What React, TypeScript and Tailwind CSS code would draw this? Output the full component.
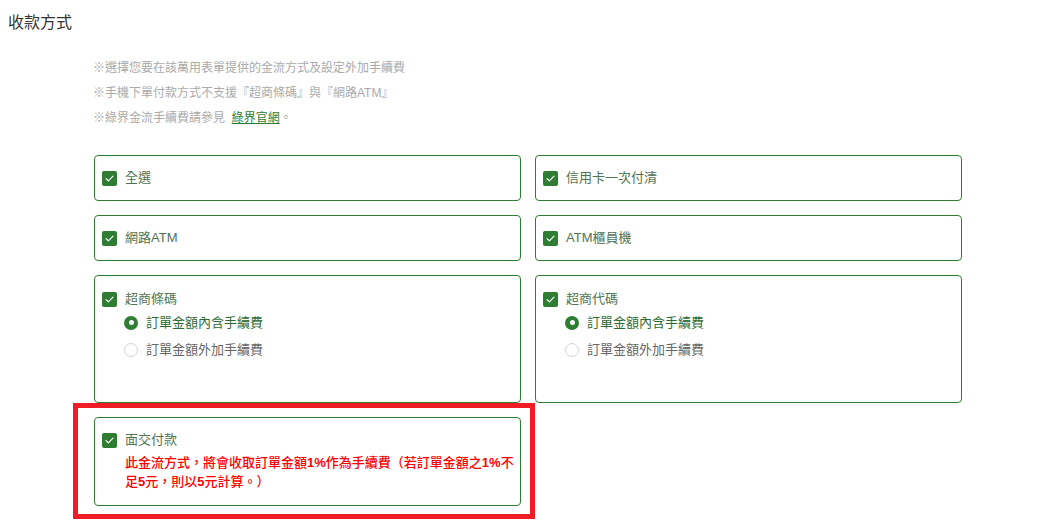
import React from 'react';

const FONT = '"Liberation Sans", "Noto Sans CJK TC", sans-serif';

function CheckBox() {
  return (
    <span className="flex h-[15px] w-[15px] shrink-0 items-center justify-center rounded-[2px] bg-[#2e7d32]">
      <svg width="9" height="7" viewBox="0 0 9 7" fill="none">
        <path d="M1 3.6 L3.4 5.8 L8 1.2" stroke="#fff" strokeWidth="1.2" strokeLinecap="round" strokeLinejoin="round" />
      </svg>
    </span>
  );
}

function CheckRow({ label }: { label: string }) {
  return (
    <div className="flex h-5 items-center gap-2">
      <CheckBox />
      <span className="text-[13px] text-[#4f7354]">{label}</span>
    </div>
  );
}

function Radio({ checked, label }: { checked: boolean; label: string }) {
  return (
    <div className="flex h-[27px] items-center gap-2 pl-[22px]">
      {checked ? (
        <span className="flex h-[14px] w-[14px] items-center justify-center rounded-full bg-[#2e7d32]">
          <span className="h-[5px] w-[5px] rounded-full bg-white" />
        </span>
      ) : (
        <span className="h-[14px] w-[14px] rounded-full border border-[#d4d4d4] bg-white" />
      )}
      <span className={`text-[13px] ${checked ? 'text-[#2e6b34]' : 'text-[#666]'}`}>{label}</span>
    </div>
  );
}

function SimpleCard({ label }: { label: string }) {
  return (
    <div className="flex h-[46px] items-center rounded-[4px] border border-[#2e7d32] px-[7px]">
      <CheckRow label={label} />
    </div>
  );
}

function StoreCard({ label }: { label: string }) {
  return (
    <div className="h-[128px] rounded-[4px] border border-[#2e7d32] px-[7px] pt-[13px]">
      <CheckRow label={label} />
      <Radio checked label="訂單金額內含手續費" />
      <Radio checked={false} label="訂單金額外加手續費" />
    </div>
  );
}

export default function App() {
  return (
    <div className="relative h-[527px] w-[1050px] overflow-hidden bg-white" style={{ fontFamily: FONT }}>
      <h2 className="pl-2 pt-[11px] text-[16px] leading-6 text-[#333]">收款方式</h2>

      <div className="mt-[21px] pl-[93px] text-[12px] leading-[25px] text-[#aaa]">
        <p>※選擇您要在該萬用表單提供的金流方式及設定外加手續費</p>
        <p>※手機下單付款方式不支援『超商條碼』與『網路ATM』</p>
        <p>
          ※綠界金流手續費請參見&nbsp;&nbsp;
          <a className="text-[#2e7d32] underline">綠界官網</a>。
        </p>
      </div>

      <div className="ml-[94px] mt-[24px] grid w-[868px] grid-cols-2 gap-x-[14px] gap-y-[14px]">
        <SimpleCard label="全選" />
        <SimpleCard label="信用卡一次付清" />
        <SimpleCard label="網路ATM" />
        <SimpleCard label="ATM櫃員機" />
        <StoreCard label="超商條碼" />
        <StoreCard label="超商代碼" />
        <div className="h-[89px] rounded-[4px] border border-[#2e7d32] px-[7px] pt-[12px]">
          <CheckRow label="面交付款" />
          <p className="mt-[3px] w-[420px] pl-[23px] text-[13px] font-medium leading-[19px] text-[#ff0000]">
            此金流方式，將會收取訂單金額<b>1%</b>作為手續費（若訂單金額之<b>1%</b>不足<b>5</b>元，則以<b>5</b>元計算。）
          </p>
        </div>
      </div>

      <div className="absolute left-[73px] top-[403px] h-[116px] w-[462px] border-[5px] border-[#ee1c25]" />
    </div>
  );
}
